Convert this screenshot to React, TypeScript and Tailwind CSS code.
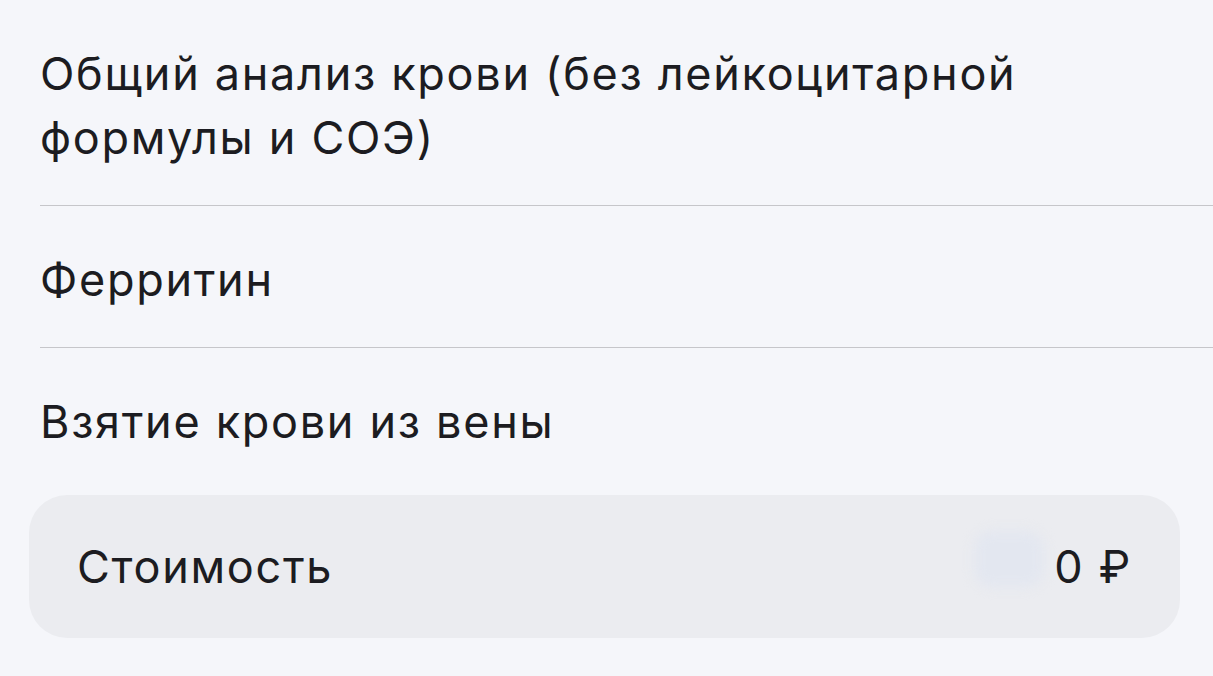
const items = [
  "Общий анализ крови (без лейкоцитарной формулы и СОЭ)",
  "Ферритин",
  "Взятие крови из вены",
];

export default function App() {
  return (
    <div className="min-h-[676px] w-full bg-[#f5f6fa] font-['Inter','Noto_Sans',sans-serif] text-[#1c1c21]">
      {/* Services */}
      <div className="pl-10">
        {items.map((item, i) => (
          <div
            key={item}
            className={`pt-[42px] pb-[35px] pr-10 ${i < items.length - 1 ? "border-b border-[#c6c6ca]" : ""}`}
          >
            <p className="text-[45px] leading-[64px] tracking-[1.7px]">{item}</p>
          </div>
        ))}
      </div>

      {/* Total */}
      <div className="mx-[29px] mt-[6px] w-[1151px] h-[143px] rounded-[38px] bg-[#ebecf0] flex items-center justify-between pl-[48px] pr-[48px]">
        <span className="text-[45px] leading-[64px] tracking-[1.7px]">Стоимость</span>
        <div className="relative flex items-center">
          <div className="absolute right-[88px] top-[-4px] w-[70px] h-[56px] rounded-[18px] bg-[#e3e7f0] blur-[6px]" />
          <span className="relative text-[45px] leading-[64px] tracking-[1.7px]">0 ₽</span>
        </div>
      </div>
    </div>
  );
}
